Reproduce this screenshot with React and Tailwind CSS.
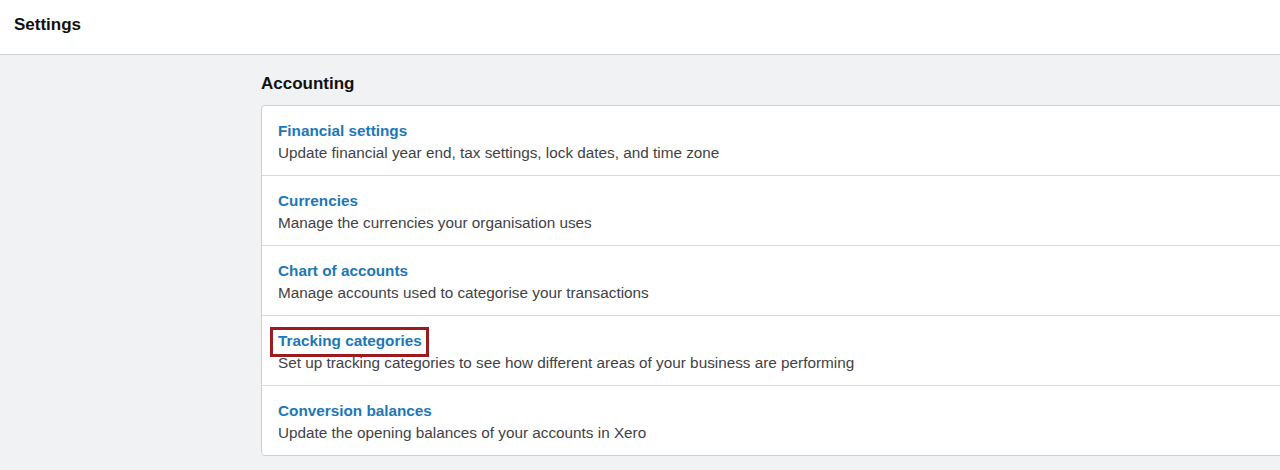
const ITEMS = [
  {
    title: "Financial settings",
    desc: "Update financial year end, tax settings, lock dates, and time zone",
  },
  {
    title: "Currencies",
    desc: "Manage the currencies your organisation uses",
  },
  {
    title: "Chart of accounts",
    desc: "Manage accounts used to categorise your transactions",
  },
  {
    title: "Tracking categories",
    desc: "Set up tracking categories to see how different areas of your business are performing",
    highlight: true,
  },
  {
    title: "Conversion balances",
    desc: "Update the opening balances of your accounts in Xero",
  },
];

export default function App() {
  return (
    <div
      className="h-[470px] w-[1280px] overflow-hidden bg-[#f1f2f4]"
      style={{ fontFamily: '"Liberation Sans", Arial, sans-serif' }}
    >
      <header className="h-[55px] bg-white border-b border-[#cdd0d3] flex items-center px-[14px]">
        <h1 className="text-[17px] font-bold text-[#111] leading-none -mt-[6px]">Settings</h1>
      </header>

      <main className="pl-[261px] pt-[18px]">
        <h2 className="text-[17px] font-bold text-[#111] leading-[22px] mb-[10px]">Accounting</h2>

        <div className="w-[1040px] bg-white border border-[#cdd0d3] rounded-[4px]">
          {ITEMS.map((item, i) => (
            <div
              key={item.title}
              className={
                i > 0
                  ? "h-[70px] pl-[16px] pt-[14px] border-t border-[#d9dbde]"
                  : "h-[69px] pl-[16px] pt-[14px]"
              }
            >
              <div className="flex">
                <div className="relative">
                  <a href="#" className="text-[15.3px] font-bold text-[#1d77b6] leading-[22px] block">
                    {item.title}
                  </a>
                  {item.highlight && (
                    <span className="absolute -left-[8px] -right-[7px] -top-[3px] -bottom-[5px] border-[3px] border-[#9b1b1f] pointer-events-none" />
                  )}
                </div>
              </div>
              <p className="text-[15.3px] text-[#3f4246] leading-[22px]">{item.desc}</p>
            </div>
          ))}
        </div>
      </main>
    </div>
  );
}
